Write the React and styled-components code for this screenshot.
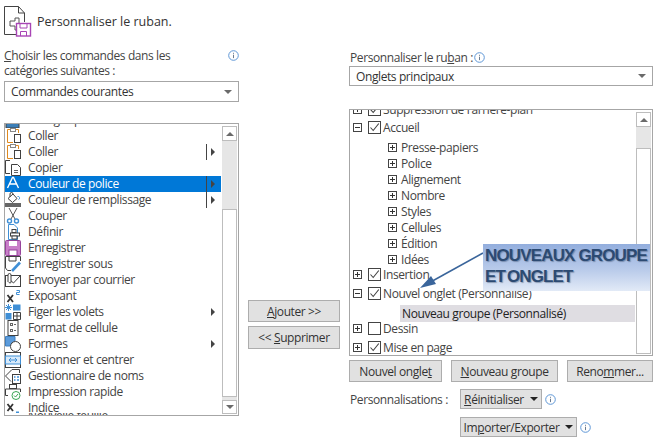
import React from "react";
import styled, { createGlobalStyle } from "styled-components";

const Global = createGlobalStyle`
  html, body { margin: 0; padding: 0; background: #fff; }
  body { font-family: "Open Sans", "Noto Sans", "Liberation Sans", sans-serif; font-size: 12px; letter-spacing: -0.4px; color: #444; }
  u { text-underline-offset: 1px; }
`;

const Page = styled.div`
  position: relative;
  width: 662px;
  height: 439px;
  overflow: hidden;
  padding: 6px 0 0 4px;
  box-sizing: border-box;
`;
const Header = styled.header`
  display: flex;
  align-items: center;
  gap: 5px;
  height: 30px;
  margin-bottom: 12px;
  font-size: 12.5px;
  letter-spacing: 0;
  color: #333;
`;
const Columns = styled.div`
  display: grid;
  grid-template-columns: 235px 92px 304px;
  column-gap: 9px;
  align-items: start;
`;
const Column = styled.section`
  display: flex;
  flex-direction: column;
`;
const LeftLabel = styled.div`
  display: flex;
  justify-content: space-between;
  height: 33px;
  line-height: 15px;
  & > svg { margin-top: 2px; }
`;
const RightLabel = styled.div`
  display: flex;
  align-items: center;
  gap: 1px;
  height: 18px;
  padding-left: 1px;
`;
const Select = styled.div`
  display: flex;
  align-items: center;
  justify-content: space-between;
  height: ${p => p.$h}px;
  box-sizing: border-box;
  border: 1px solid #a6a6a6;
  padding: 0 6px;
  color: #333;
  &::after {
    content: "";
    border-left: 4px solid transparent;
    border-right: 4px solid transparent;
    border-top: 4px solid #6a6a6a;
  }
`;
const ListBox = styled.div`
  display: flex;
  height: ${p => p.$h}px;
  margin-top: ${p => p.$mt}px;
  box-sizing: border-box;
  border: 1px solid #a6a6a6;
  overflow: hidden;
`;
const ListContent = styled.div`
  flex: 1;
  min-width: 0;
  overflow: hidden;
  margin-top: ${p => p.$offset}px;
`;
const CmdRow = styled.div`
  display: flex;
  align-items: ${p => (p.$h ? "flex-start" : "center")};
  height: ${p => p.$h || 16}px;
  overflow: hidden;
  background: ${p => (p.$selected ? "#0078d7" : "transparent")};
  color: ${p => (p.$selected ? "#fff" : "#444")};
  line-height: 16px;
  padding-right: 6px;
  & > svg { flex: none; }
`;
const CmdLabel = styled.span`
  flex: 1;
  margin-left: 7px;
  white-space: nowrap;
  line-height: ${p => (p.$cut ? "6px" : "16px")};
`;
const Sep = styled.i`
  width: 1px;
  height: 16px;
  background: #444;
  margin-right: 4px;
`;
const Tri = styled.i`
  border-top: 4px solid transparent;
  border-bottom: 4px solid transparent;
  border-left: 4px solid #444;
`;
const Scrollbar = styled.div`
  flex: none;
  display: flex;
  flex-direction: column;
  width: 15px;
  padding: 2px 1px;
  background: #fff;
`;
const ScrollBtn = styled.div`
  flex: none;
  height: ${p => p.$h || 14}px;
  box-sizing: border-box;
  border: 1px solid #bdbdbd;
  background: #fff;
  display: flex;
  align-items: center;
  justify-content: center;
  &::after {
    content: "";
    border-left: 4px solid transparent;
    border-right: 4px solid transparent;
    ${p => (p.$down ? "border-top: 4px solid #6a6a6a;" : "border-bottom: 4px solid #6a6a6a;")}
  }
`;
const Track = styled.div`
  flex: none;
  height: ${p => p.$h}px;
  background: #e6e6e6;
`;
const Thumb = styled.div`
  flex: none;
  height: ${p => p.$h}px;
  box-sizing: border-box;
  border: 1px solid #bdbdbd;
  background: #fff;
`;
const MoveButtons = styled.div`
  display: flex;
  flex-direction: column;
  gap: 4px;
  padding-top: 252px;
`;
const Button = styled.button`
  display: block;
  height: ${p => p.$h || 22}px;
  width: ${p => (p.$w ? `${p.$w}px` : "auto")};
  padding: 0;
  box-sizing: border-box;
  border: 1.5px solid #adadad;
  background: #e1e1e1;
  font: inherit;
  letter-spacing: inherit;
  color: #333;
  white-space: nowrap;
`;
const TreeTop = styled.div`
  display: flex;
  align-items: center;
  height: ${p => p.$h || 18}px;
  margin-top: ${p => p.$mt || 0}px;
  padding-left: 3px;
  white-space: nowrap;
  color: #444;
`;
const Expander = styled.span`
  flex: none;
  width: 9px;
  height: 9px;
  box-sizing: border-box;
  border: 1px solid #444;
  position: relative;
  &::before {
    content: "";
    position: absolute;
    left: 1px; right: 1px; top: 3px; height: 1px;
    background: #333;
  }
  ${p => p.$plus && `&::after {
    content: "";
    position: absolute;
    top: 1px; bottom: 1px; left: 3px; width: 1px;
    background: #333;
  }`}
`;
const Check = styled.span`
  flex: none;
  display: flex;
  width: 13px;
  height: 13px;
  margin: 0 2px 0 6px;
  box-sizing: border-box;
  border: 1px solid #444;
  background: #fff;
`;
const SubGroup = styled.div`
  padding-top: 3px;
`;
const SubRow = styled.div`
  display: flex;
  align-items: center;
  gap: 4px;
  height: 16px;
  padding-left: 38px;
  white-space: nowrap;
`;
const GroupRow = styled.div`
  display: flex;
  align-items: center;
  height: 17px;
  margin: 3px 0 0 50px;
  padding-left: 2px;
  background: #dfdde2;
  color: #222;
  white-space: nowrap;
`;
const ActionRow = styled.div`
  display: flex;
  justify-content: space-between;
  margin-top: 4px;
  width: 304px;
`;
const Custom = styled.div`
  display: grid;
  grid-template-columns: 110px auto;
  row-gap: 8px;
  margin-top: 7px;
  align-items: center;
  padding-left: 1px;
`;
const InfoLine = styled.div`
  display: flex;
  align-items: center;
  gap: 3px;
  grid-column: ${p => p.$col || "auto"};
`;
const DropButton = styled(Button)`
  display: flex;
  align-items: center;
  justify-content: center;
  gap: 6px;
  &::after {
    content: "";
    border-left: 4px solid transparent;
    border-right: 4px solid transparent;
    border-top: 4px solid #222;
  }
`;
const Callout = styled.div`
  position: absolute;
  left: 483px;
  top: 244px;
  width: 167px;
  height: 47px;
  box-sizing: border-box;
  padding: 1px 0 0 2px;
  background: linear-gradient(180deg, #93aedd 0%, #b9cbea 55%, #e2eaf7 100%);
  font-family: "Liberation Sans", Arial, sans-serif;
  font-weight: 700;
  font-size: 17px;
  line-height: 21px;
  letter-spacing: -0.85px;
  color: #2c4a72;
  text-shadow: 1px 1px 1px rgba(40, 60, 90, .4);
  white-space: nowrap;
`;
const CalloutTight = styled.span`
  word-spacing: -2px;
`;
const CalloutArrow = styled.svg`
  position: absolute;
  left: 415px;
  top: 245px;
`;

const Info = () => (
  <svg width="11" height="11" viewBox="0 0 11 11" fill="none">
    <circle cx="5.5" cy="5.5" r="4.8" stroke="#5f97d6" />
    <rect x="5" y="4.7" width="1" height="3.4" fill="#6a7b90" />
    <rect x="5" y="2.8" width="1" height="1" fill="#6a7b90" />
  </svg>
);

const Ico = ({ children }) => (
  <svg width="16" height="16" viewBox="0 0 16 16" fill="none" strokeWidth="1">{children}</svg>
);
const D = "#404040";
const B = "#3f8fd6";

const icons = {
  top: <><rect x="1" y="10" width="13" height="6" fill="#3b7fb8" stroke={D} /></>,
  paste: <><path d="M6 1.5H2.5V14.5H8M10 1.5H13.5V5" stroke="#e08a1e" /><rect x="5.5" y="0.5" width="5" height="3" fill="#fff" stroke="#888" /><rect x="9.5" y="6.5" width="6" height="8" fill="#fff" stroke={D} /></>,
  copy: <><path d="M5 0.5H0.5V13.5H5" stroke={D} /><path d="M6.5 4.5H12.5L15.5 7.5V15.5H6.5Z" fill="#fff" stroke={D} /><path d="M9 10.5H13M9 12.5H13" stroke="#666" /></>,
  color: <path d="M2.5 12L7.5 1.5H8.5L13.5 12M4.5 8H11.5" stroke="#fff" strokeWidth="1.4" />,
  fill: <><path d="M3 6.5L8 2L12 6.5L7.5 10.5Z" fill="#fff" stroke={D} /><path d="M5 5V2a1.5 1.5 0 0 1 3 0" stroke={D} /><path d="M12.5 4.5a1.5 1.5 0 1 1 1 3" stroke={B} /><rect x="0" y="11" width="16" height="4" fill="#666" /></>,
  cut: <><path d="M4 0L10 11M12 0L6 11" stroke="#555" /><circle cx="4.5" cy="13" r="2" stroke={B} strokeWidth="1.4" /><circle cx="11.5" cy="13" r="2" stroke={B} strokeWidth="1.4" /></>,
  define: <><path d="M3.5 0.5H9L12.5 4V15.5H3.5Z" stroke={B} /><rect x="7" y="5.5" width="4" height="3" fill="#fff" stroke={D} /><rect x="5.5" y="9" width="9" height="3" fill="#fff" stroke={D} /><rect x="7" y="12" width="5" height="3" fill="#fff" stroke={D} /></>,
  save: <><rect x="0.5" y="0.5" width="15" height="15" rx="1" fill="#c97fc9" stroke="#96439b" /><rect x="4" y="1" width="8" height="5" fill="#fff" /><rect x="4" y="10" width="8" height="5.5" fill="#fff" stroke="#96439b" /></>,
  saveAs: <><path d="M6 14.5H2.5L0.5 12V0.5H15.5V5" stroke={D} /><path d="M4 1V5H11V1" stroke={D} /><path d="M7 15L15 6.5" stroke={B} strokeWidth="2.6" /></>,
  mail: <><rect x="0.5" y="3.5" width="15" height="11" fill="#fff" stroke={D} /><path d="M4 7L8.5 11L15 4" stroke={D} /><path d="M3 10V3a1.5 1.5 0 0 1 3 0V10a1 1 0 0 1-2 0" stroke={D} fill="#fff" /></>,
  sup: <><path d="M2.5 7L8 14M8 7L2.5 14" stroke="#333" strokeWidth="1.8" /><path d="M11.5 2.5H14.5V4.5H11.5V6.5H14.5" stroke={B} /></>,
  freeze: <><path d="M3.5 0V7M0 3.5H7M1 1L6 6M6 1L1 6" stroke={B} /><rect x="8" y="0.5" width="7.5" height="6" fill={B} /><rect x="0.5" y="9" width="6" height="6.5" fill={B} /><path d="M8.5 8.5V15.5H15.5V8.5H8.5M12 8V15.5M8 12H15.5" stroke={D} /></>,
  format: <><rect x="3" y="0.5" width="10" height="15" stroke={D} /><rect x="5.5" y="3.5" width="2" height="2" stroke="#666" /><path d="M9 4.5H11" stroke="#666" /><rect x="5.5" y="9.5" width="2" height="2" stroke="#666" /><path d="M9 10.5H11" stroke="#666" /></>,
  shapes: <><path d="M0.5 0.5H10V5A6 6 0 0 0 5 10H0.5Z" fill="#5b9bdb" stroke="#3f7fbf" /><circle cx="10.5" cy="10.5" r="5" fill="#fff" stroke={D} /></>,
  merge: <><rect x="0.5" y="0.5" width="15" height="15" stroke={D} /><rect x="0.5" y="4" width="15" height="8" fill="#d8eafa" stroke={B} /><path d="M4 8H12M4 8L6 6M4 8L6 10M12 8L10 6M12 8L10 10" stroke={B} /></>,
  names: <><path d="M14.5 5V1.5H7L0.5 8L6 13.5" stroke={D} /><rect x="7.5" y="6.5" width="8" height="9" fill="#fff" stroke={D} /><path d="M9 9H10.5M12 9H14M9 12H10.5M12 12H14" stroke={B} strokeWidth="1.5" /></>,
  print: <><rect x="4.5" y="0.5" width="7" height="4" fill="#fff" stroke={D} /><path d="M3 11.5H0.5V5H15.5V8" stroke={D} /><circle cx="11" cy="11.5" r="4" fill="#fff" stroke="#3aa655" /><path d="M9 11.5L10.5 13L13 10" stroke="#3aa655" /></>,
  sub: <><path d="M2.5 4L8 11M8 4L2.5 11" stroke="#333" strokeWidth="1.8" /><path d="M11 12.5H14" stroke={B} strokeWidth="2" /></>,
  blank: null,
};

const commands = [
  { i: "top", t: "Collage spécial" },
  { i: "paste", t: "Coller" },
  { i: "paste", t: "Coller", sep: 1, tri: 1 },
  { i: "copy", t: "Copier" },
  { i: "color", t: "Couleur de police", sep: 1, tri: 1, selected: 1 },
  { i: "fill", t: "Couleur de remplissage", sep: 1, tri: 1 },
  { i: "cut", t: "Couper" },
  { i: "define", t: "Définir" },
  { i: "save", t: "Enregistrer" },
  { i: "saveAs", t: "Enregistrer sous" },
  { i: "mail", t: "Envoyer par courrier" },
  { i: "sup", t: "Exposant" },
  { i: "freeze", t: "Figer les volets", tri: 1 },
  { i: "format", t: "Format de cellule" },
  { i: "shapes", t: "Formes", tri: 1 },
  { i: "merge", t: "Fusionner et centrer" },
  { i: "names", t: "Gestionnaire de noms" },
  { i: "print", t: "Impression rapide" },
  { i: "sub", t: "Indice", h: 13 },
  { i: "blank", t: "Nouvelle feuille", h: 2, cut: 1 },
];

const Tick = () => (
  <svg width="11" height="11" viewBox="0 0 11 11" fill="none">
    <path d="M1.5 5.5L4.2 8.5L9.8 1.5" stroke="#444" strokeWidth="1.1" />
  </svg>
);

const TopRow = ({ plus, checked, h, mt, children }) => (
  <TreeTop $h={h} $mt={mt}>
    <Expander $plus={plus} />
    <Check>{checked && <Tick />}</Check>
    {children}
  </TreeTop>
);

const groups = ["Presse-papiers", "Police", "Alignement", "Nombre", "Styles", "Cellules", "Édition", "Idées"];

export default function App() {
  return (
    <Page>
      <Global />
      <Header>
        <svg width="28" height="31" viewBox="0 0 28 31" fill="none">
          <path d="M0.5 28.5V0.5H14.5L20.5 7V16M14.5 0.5V7H20.5M0.5 28.5H12" stroke="#444" />
          <path d="M6 15H11V12H15V18M6 15V20H11V24H14" stroke="#555" />
          <rect x="12.5" y="17.5" width="14" height="12.5" fill="#fff" stroke="#a845b5" strokeWidth="1.4" />
          <path d="M16 18V22H23V18M16.5 30V25.5H22.5V30" stroke="#a845b5" />
        </svg>
        Personnaliser le ruban.
      </Header>
      <Columns>
        <Column>
          <LeftLabel>
            <span><u>C</u>hoisir les commandes dans les<br />catégories suivantes :</span>
            <Info />
          </LeftLabel>
          <Select $h={21}>Commandes courantes</Select>
          <ListBox $h={293} $mt={21}>
            <ListContent $offset={-12}>
              {commands.map((c, n) => (
                <CmdRow key={n} $selected={c.selected} $h={c.h}>
                  <Ico>{icons[c.i]}</Ico>
                  <CmdLabel $cut={c.cut}>{c.t}</CmdLabel>
                  {c.sep && <Sep />}
                  {c.tri && <Tri />}
                </CmdRow>
              ))}
            </ListContent>
            <Scrollbar>
              <ScrollBtn $h={15} />
              <Track $h={68} />
              <Thumb $h={188} />
              <Track $h={3} />
              <ScrollBtn $down $h={14} />
            </Scrollbar>
          </ListBox>
        </Column>
        <MoveButtons>
          <Button $h={22}><u>A</u>jouter &gt;&gt;</Button>
          <Button $h={23}>&lt;&lt; <u>S</u>upprimer</Button>
        </MoveButtons>
        <Column>
          <RightLabel><span>Personnaliser le ru<u>b</u>an :</span><Info /></RightLabel>
          <Select $h={20}>Onglets principaux</Select>
          <ListBox $h={247} $mt={23}>
            <ListContent $offset={-10}>
              <TopRow plus checked h={18}>Suppression de l'arrière-plan</TopRow>
              <TopRow checked h={18}>Accueil</TopRow>
              <SubGroup>
                {groups.map(g => (
                  <SubRow key={g}><Expander $plus />{g}</SubRow>
                ))}
              </SubGroup>
              <TopRow plus checked h={19} mt={-2}>Insertion</TopRow>
              <TopRow checked h={18}>Nouvel onglet (Personnalisé)</TopRow>
              <GroupRow>Nouveau groupe (Personnalisé)</GroupRow>
              <TopRow plus h={18} mt={-3}>Dessin</TopRow>
              <TopRow plus checked h={18} mt={1}>Mise en page</TopRow>
            </ListContent>
            <Scrollbar>
              <ScrollBtn $h={15} />
              <Track $h={21} />
              <Thumb $h={206} />
            </Scrollbar>
          </ListBox>
          <ActionRow>
            <Button $w={93}>Nouvel ongle<u>t</u></Button>
            <Button $w={107}><u>N</u>ouveau groupe</Button>
            <Button $w={86}>Reno<u>m</u>mer...</Button>
          </ActionRow>
          <Custom>
            <span>Personnalisations :</span>
            <InfoLine>
              <DropButton $w={82} $h={20}><span><u>R</u>éinitialiser</span></DropButton>
              <Info />
            </InfoLine>
            <InfoLine $col="2">
              <DropButton $w={117} $h={20}><span>Im<u>p</u>orter/Exporter</span></DropButton>
              <Info />
            </InfoLine>
          </Custom>
        </Column>
      </Columns>
      <CalloutArrow width="70" height="46" viewBox="0 0 70 46" fill="none">
        <path d="M68 8L12 39" stroke="#3a659b" strokeWidth="1.6" />
        <path d="M5 43L16 31L21 39Z" fill="#3a659b" />
      </CalloutArrow>
      <Callout>NOUVEAUX GROUPE<br /><CalloutTight>ET ONGLET</CalloutTight></Callout>
    </Page>
  );
}
